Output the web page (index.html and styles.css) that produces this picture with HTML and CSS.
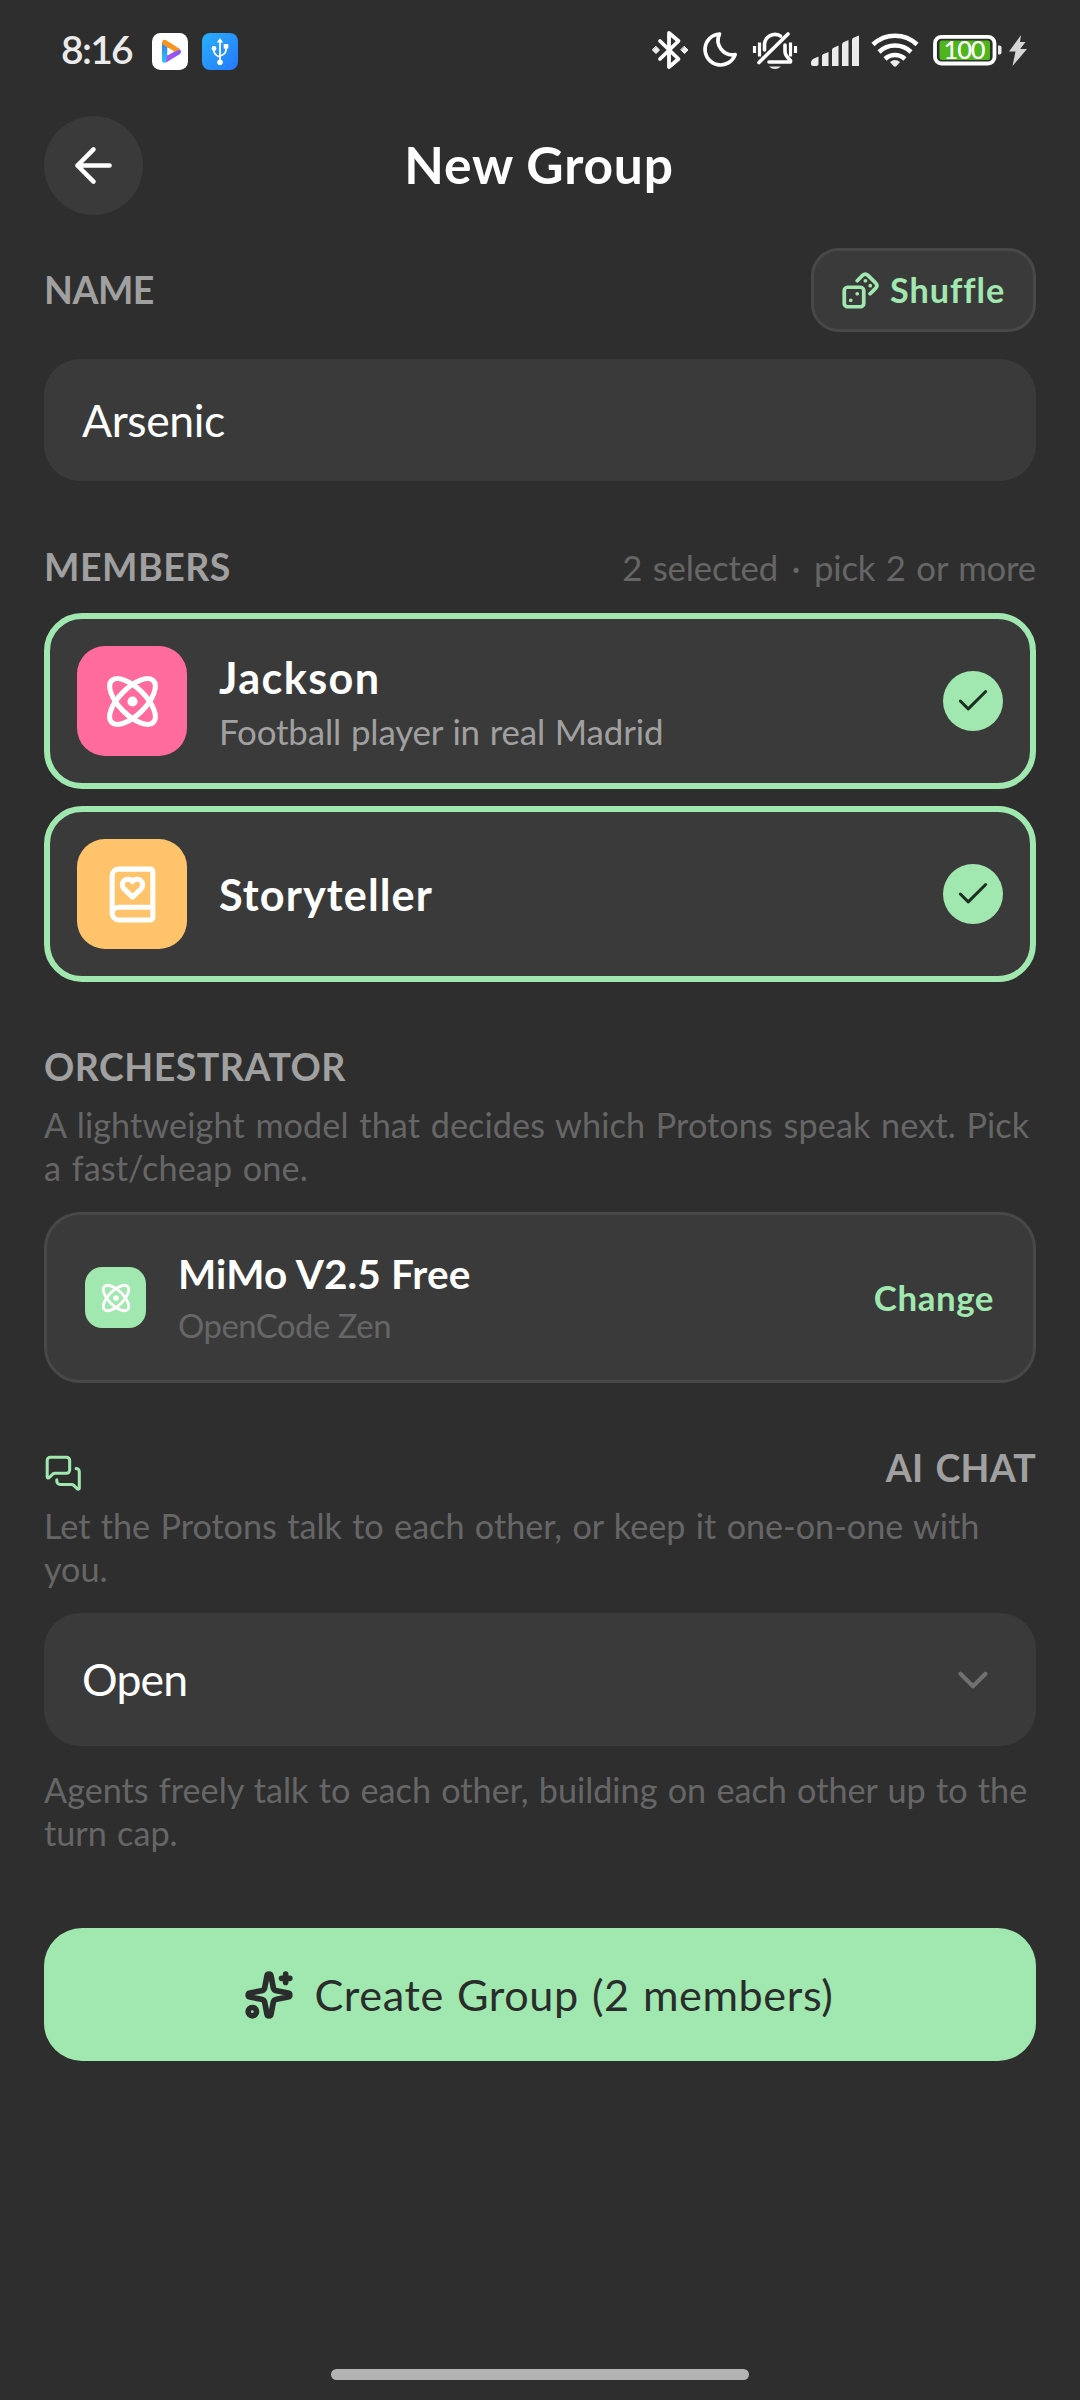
FILE: index.html
```html
<!DOCTYPE html>
<html lang="en">
<head>
<meta charset="utf-8">
<title>New Group</title>
<link rel="stylesheet" href="styles.css">
</head>
<body>
<svg class="sprite" aria-hidden="true">
  <symbol id="atom" viewBox="0 0 24 24">
    <circle cx="12" cy="12" r="1"/>
    <path d="M20.2 20.2c2.04-2.03.02-7.36-4.5-11.9-4.54-4.52-9.87-6.54-11.9-4.5-2.04 2.03-.02 7.36 4.5 11.9 4.54 4.52 9.87 6.54 11.9 4.5Z"/>
    <path d="M15.7 15.7c4.52-4.54 6.54-9.87 4.5-11.9-2.03-2.04-7.36-.02-11.9 4.5-4.52 4.54-6.54 9.87-4.5 11.9 2.03 2.04 7.36.02 11.9-4.5Z"/>
  </symbol>
  <symbol id="check" viewBox="0 0 24 24"><path d="M20 6 9 17l-5-5"/></symbol>
</svg>
<div class="screen">
  <header class="status">
    <span class="clock">8:16</span>
    <svg class="app-play" viewBox="0 0 36 37">
      <defs>
        <linearGradient id="cyan" x1="0" y1="0" x2="0" y2="1"><stop offset="0" stop-color="#2f7df0"/><stop offset="1" stop-color="#2cc8fa"/></linearGradient>
        <linearGradient id="violet" x1="0" y1="0" x2="1" y2="0"><stop offset="0" stop-color="#b64ef0"/><stop offset="1" stop-color="#7a5cf5"/></linearGradient>
      </defs>
      <rect width="36" height="37" rx="8.5" fill="#fff"/>
      <path d="M10 9v18.500q0 3 3.500 2l2-1V13z" fill="url(#cyan)"/>
      <path d="M14 29.500 28 21q2-2.500 0-4.500l-5 0-8 6z" fill="url(#violet)"/>
      <path d="M10.500 7.500q1.500-1.500 4 0L28 16l-5 3-7.500-4.500L10 11z" fill="#f7941e"/>
      <path d="M15.500 14.500v8l7-4z" fill="#fff"/>
    </svg>
    <svg class="app-usb" viewBox="0 0 36 37">
      <defs><linearGradient id="blue" x1="0" y1="0" x2="1" y2="1"><stop offset="0" stop-color="#29b0fc"/><stop offset="1" stop-color="#2578fb"/></linearGradient></defs>
      <rect width="36" height="37" rx="8" fill="url(#blue)"/>
      <g fill="none" stroke="#fff" stroke-width="1.800"><path d="M18 8v20M12 16v2q0 4 6 6M24 14v3q0 4-6 6"/></g>
      <g fill="#fff"><path d="M18 5l3.200 4.500h-6.400z"/><circle cx="12" cy="15.500" r="2.400"/><rect x="21.700" y="11" width="4.600" height="4.600"/><circle cx="18" cy="29.300" r="2.800"/></g>
    </svg>
    <svg class="system" viewBox="652 24 378 52" fill="none" stroke="#ebebeb" stroke-linecap="round" stroke-linejoin="round">
      <g stroke-width="3.800"><path d="M660 41l18.500 18-9.500 8V33l9.500 8L660 59"/></g>
      <path d="M656 46.500l3.500 3.500-3.500 3.500-3.500-3.500zM684.500 46.500l3.500 3.500-3.500 3.500-3.500-3.500z" fill="#ebebeb" stroke-width="1"/>
      <path d="M719.500 34a15.500 15.500 0 1 0 15.700 20.500 14.500 14.500 0 0 1-15.700-20.500z" stroke-width="3.700"/>
      <g stroke-width="3.600"><path d="M759 62.500 788 34M764.500 50v-5.500a10.500 10.500 0 0 1 16-8.500M785 45v6.500q0 4 5.500 9v1.500H769"/></g>
      <g stroke-width="3.200" stroke-linecap="butt"><path d="M754.500 46v7M759.500 42.500v14M790.500 42.500v14M795.500 46v7"/></g>
      <path d="M769 66.500h12q-6 5-12 0z" fill="#ebebeb" stroke="none"/>
      <g fill="#ebebeb" stroke="none"><path d="M811 63q0-3 3-4.500l4.500-2V64q0 2-2 2h-3.500q-2 0-2-2zM822 56q0-1.500 1.500-2l5-2V66H822zM832 50q0-2 2-2.500l4.500-2V66H832zM842 44.500q0-2 2-2.500l4.500-2V66H842zM852 40q0-2 2-2.500l5-2V66H852z"/></g>
      <g stroke-width="4.600" stroke-linecap="butt"><path d="M873 44.500a32 32 0 0 1 44 0M879 52a23 23 0 0 1 32 0M885 59a14.500 14.500 0 0 1 20 0"/></g>
      <path d="M890 62q5-4 10 0l-3.500 4q-1.500 1.500-3 0z" fill="#ebebeb" stroke="none"/>
      <rect x="935" y="36.800" width="59.500" height="26.700" rx="6.500" stroke-width="3.800"/>
      <rect x="939.500" y="40.500" width="50.500" height="19.500" rx="2.500" fill="#4eb51c" stroke="none"/>
      <path d="M998 45.500h1.500q2 0 2 2v5q0 2-2 2H998z" fill="#ebebeb" stroke="none"/>
      <text class="level" x="964" y="59" text-anchor="middle">100</text>
      <path d="M1021 35 1009 51.500h6.500L1012.500 66 1027 49h-6.800l5.300-7h-5.500z" fill="#d5d5d5" stroke="none"/>
    </svg>
  </header>

  <nav class="topbar">
    <button class="back"><svg viewBox="0 0 24 24"><path d="m12 19-7-7 7-7M19 12H5"/></svg></button>
    <h1>New Group</h1>
  </nav>

  <main>
    <div class="row name-row">
      <h2 class="label name">NAME</h2>
      <button class="shuffle">
        <svg viewBox="0 0 24 24"><rect x="2" y="10" width="12" height="12" rx="2"/><path d="m17.920 14 3.500-3.500a2.240 2.240 0 0 0 0-3l-5-4.920a2.240 2.240 0 0 0-3 0L10 6M6 18h.01M10 14h.01M15 6h.01M18 9h.01"/></svg>
        <span>Shuffle</span>
      </button>
    </div>
    <div class="field"><span class="arsenic">Arsenic</span></div>

    <div class="row members-row">
      <h2 class="label">MEMBERS</h2>
      <span class="hint">2 selected <span class="dot">·</span> pick 2 or more</span>
    </div>
    <div class="members">
      <div class="member">
        <div class="avatar pink"><svg><use href="#atom"/></svg></div>
        <div class="who"><div class="title">Jackson</div><div class="about">Football player in real Madrid</div></div>
        <div class="tick"><svg><use href="#check"/></svg></div>
      </div>
      <div class="member">
        <div class="avatar amber"><svg viewBox="0 0 24 24"><path d="M16 8.200A2.220 2.220 0 0 0 13.800 6c-.8 0-1.400.3-1.800.9-.4-.6-1-.9-1.800-.9A2.220 2.220 0 0 0 8 8.200c0 .6.3 1.200.7 1.600A226.652 226.652 0 0 0 12 13a404 404 0 0 0 3.300-3.100 2.413 2.413 0 0 0 .7-1.700"/><path d="M4 19.500v-15A2.500 2.500 0 0 1 6.500 2H19a1 1 0 0 1 1 1v18a1 1 0 0 1-1 1H6.500a1 1 0 0 1 0-5H20"/></svg></div>
        <div class="who"><div class="title story">Storyteller</div></div>
        <div class="tick"><svg><use href="#check"/></svg></div>
      </div>
    </div>

    <h2 class="label orch">ORCHESTRATOR</h2>
    <p class="note">A lightweight model that decides which Protons speak next. Pick<br>a fast/cheap one.</p>
    <div class="model">
      <div class="model-icon"><svg><use href="#atom"/></svg></div>
      <div class="who"><div class="model-name">MiMo V2.5 Free</div><div class="provider">OpenCode Zen</div></div>
      <span class="change">Change</span>
    </div>

    <div class="row chat-row">
      <svg viewBox="0 0 24 24"><path d="M16 10a2 2 0 0 1-2 2H6.828a2 2 0 0 0-1.414.586l-2.202 2.202A.71.71 0 0 1 2 14.286V4a2 2 0 0 1 2-2h10a2 2 0 0 1 2 2z"/><path d="M20 9a2 2 0 0 1 2 2v10.286a.71.71 0 0 1-1.212.502l-2.202-2.202A2 2 0 0 0 17.172 19H10a2 2 0 0 1-2-2v-1"/></svg>
      <h2 class="label chat">AI CHAT</h2>
    </div>
    <p class="note lets">Let the Protons talk to each other, or keep it one-on-one with<br>you.</p>
    <div class="field select"><span class="open">Open</span><svg viewBox="0 0 24 24"><path d="m6 9 6 6 6-6"/></svg></div>
    <p class="note after">Agents freely talk to each other, building on each other up to the<br>turn cap.</p>

    <button class="create">
      <svg viewBox="0 0 24 24"><path d="M11.017 2.814a1 1 0 0 1 1.966 0l1.051 5.558a2 2 0 0 0 1.594 1.594l5.558 1.051a1 1 0 0 1 0 1.966l-5.558 1.051a2 2 0 0 0-1.594 1.594l-1.051 5.558a1 1 0 0 1-1.966 0l-1.051-5.558a2 2 0 0 0-1.594-1.594l-5.558-1.051a1 1 0 0 1 0-1.966l5.558-1.051a2 2 0 0 0 1.594-1.594zM20 2v4M22 4h-4"/><circle cx="4" cy="20" r="2"/></svg>
      <span>Create Group (2 members)</span>
    </button>
  </main>
  <div class="home"></div>
</div>
</body>
</html>
```
FILE: styles.css
```css
* { box-sizing: border-box; margin: 0; padding: 0; }
body { background: #2e2e2e; color: #fff; font-family: Lato, "Noto Sans", sans-serif; }
button { border: 0; font: inherit; color: inherit; background: none; }
svg { fill: none; stroke: currentColor; stroke-width: 2; stroke-linecap: round; stroke-linejoin: round; flex: none; display: block; }
.sprite { display: none; }
.screen { width: 1080px; height: 2400px; display: flex; flex-direction: column; background: #2e2e2e; overflow: hidden; }

.status { height: 116px; padding: 24px 50px 0 61px; display: flex; align-items: flex-start; }
.clock { width: 91px; font-size: 39px; line-height: 51px; font-weight: 600; letter-spacing: -1.7px; color: #ebebeb; white-space: nowrap; }
.app-play, .app-usb { width: 36px; height: 37px; margin-top: 9px; stroke: none; }
.app-usb { margin-left: 14px; }
.system { width: 378px; height: 52px; margin-left: auto; }
.level { font: 500 25.500px Lato, sans-serif; letter-spacing: -1.2px; fill: #fff; stroke: none; }

.topbar { height: 99px; padding: 0 44px; display: grid; grid-template-columns: 99px 1fr 99px; align-items: center; }
.back { width: 99px; height: 99px; border-radius: 50%; background: #3a3a3a; display: grid; place-items: center; }
.back svg { width: 55px; height: 55px; }
h1 { padding: 0 2px 4px 0; font-size: 51.500px; line-height: 62px; font-weight: 700; letter-spacing: .81px; text-align: center; white-space: nowrap; }

main { padding: 33px 44px 0; flex: 1; }
.row { display: flex; justify-content: space-between; align-items: center; }
.label { padding-top: 1px; height: 44px; font-size: 37.500px; line-height: 44px; font-weight: 700; letter-spacing: .5px; color: #a0a0a0; white-space: nowrap; }
.label.name { letter-spacing: -.5px; padding-top: 0; }
.shuffle { width: 225px; height: 84px; border: 3px solid #484848; border-radius: 28px; background: #3a3a3a; color: #a0e8af; display: flex; align-items: center; padding-left: 27px; gap: 10px; font-size: 34.200px; font-weight: 700; letter-spacing: 1px; }
.shuffle span { padding-bottom: 2px; }
.shuffle svg { width: 39px; height: 39px; stroke-width: 2.300; }
.field { height: 122px; margin-top: 27px; border-radius: 36px; background: #3a3a3a; padding: 0 38px; display: flex; align-items: center; justify-content: space-between; font-size: 44.500px; line-height: 54px; }
.arsenic { letter-spacing: -.4px; }
.open { letter-spacing: -.8px; padding-bottom: 2px; }

.members-row { height: 44px; margin: 63px 0 25px; }
.hint { font-size: 34.700px; line-height: 44px; letter-spacing: -.15px; word-spacing: 1.800px; color: #666; padding-top: 4px; white-space: nowrap; }
.dot { margin: 0 3px; }
.members { display: flex; flex-direction: column; gap: 17px; }
.member { height: 176px; border: 6px solid #a0e8af; border-radius: 38px; background: #3a3a3a; padding: 0 27px; display: flex; align-items: center; }
.avatar { width: 110px; height: 110px; border-radius: 28px; display: grid; place-items: center; }
.avatar svg { width: 61px; height: 61px; }
.pink { background: #ff6b9d; }
.amber { background: #ffc46b; }
.who { flex: 1; margin-left: 32px; white-space: nowrap; }
.title { font-size: 43.200px; line-height: 52px; font-weight: 700; letter-spacing: 1.4px; padding-bottom: 2px; }
.story { letter-spacing: 1.09px; padding-bottom: 0; }
.about { margin-top: 7px; font-size: 34.900px; line-height: 40px; letter-spacing: -.15px; word-spacing: 1px; color: #a0a0a0; }
.tick { width: 60px; height: 60px; border-radius: 50%; background: #a0e8af; color: #1c3022; display: grid; place-items: center; }
.tick svg { width: 38px; height: 38px; stroke-width: 1.900; }

.orch { margin-top: 62px; }
.note { margin-top: 14px; padding-top: 1px; font-size: 34.200px; line-height: 43px; letter-spacing: .1px; word-spacing: 1.800px; color: #666; white-space: nowrap; }
.lets { letter-spacing: -.03px; word-spacing: 1.700px; }
.model { margin-top: 23px; height: 171px; border: 3px solid #484848; border-radius: 36px; background: #3a3a3a; padding: 0 39px 0 38px; display: flex; align-items: center; }
.model-icon { width: 61px; height: 61px; border-radius: 17px; background: #a0e8af; display: grid; place-items: center; }
.model-icon svg { width: 34px; height: 34px; }
.model-name { font-size: 40.500px; line-height: 48px; font-weight: 700; letter-spacing: .11px; }
.provider { margin-top: 8px; font-size: 32.800px; line-height: 40px; letter-spacing: -.45px; color: #666; }
.change { font-size: 34.900px; font-weight: 700; letter-spacing: .56px; color: #a0e8af; padding-bottom: 1px; }

.chat-row { height: 44px; margin-top: 62px; }
.chat-row svg { width: 38.500px; height: 38.500px; margin-top: 12px; color: #a0e8af; stroke-width: 1.900; }
.chat { word-spacing: 3px; letter-spacing: .2px; }
.select { height: 133px; margin-top: 23px; }
.select svg { width: 50px; height: 50px; color: #707070; }
.after { margin-top: 21px; letter-spacing: 0; word-spacing: 1.500px; }
.create { margin-top: 74px; width: 992px; height: 133px; border-radius: 38px; background: #a0e8af; color: #2a2d2b; display: flex; align-items: center; justify-content: center; gap: 21px; font-size: 43.200px; letter-spacing: .6px; word-spacing: 1.500px; white-space: nowrap; padding-right: 3px; }
.create svg { width: 50px; height: 50px; stroke-width: 2.700; }
.create span { padding-bottom: 2px; }
.home { width: 418px; height: 11px; margin: 0 auto 20px; border-radius: 6px; background: #b3b3b3; }
```
